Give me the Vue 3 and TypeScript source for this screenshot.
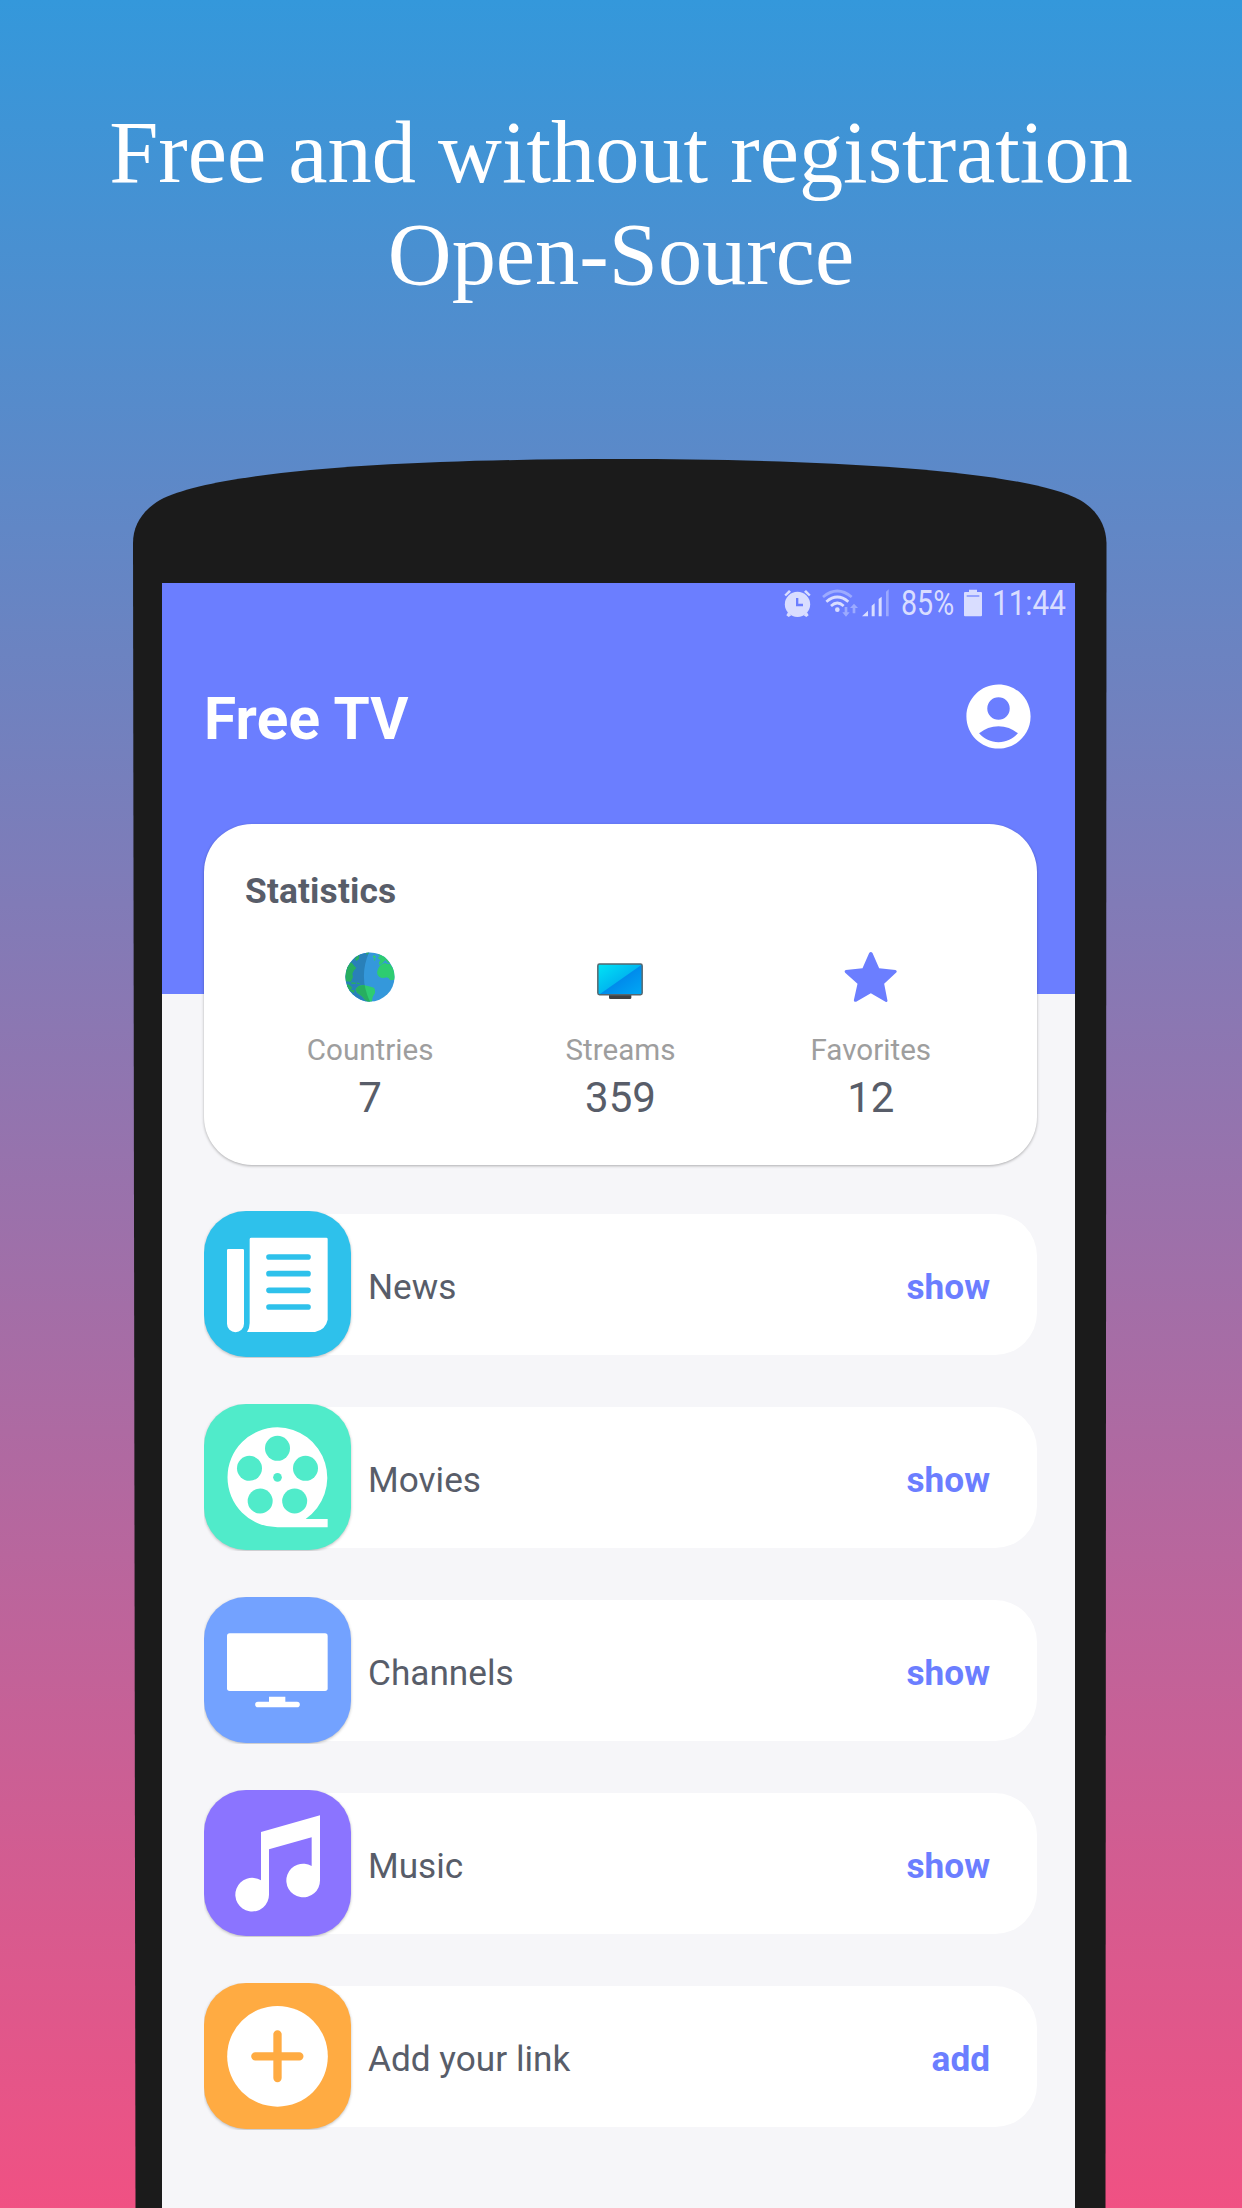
<script setup lang="ts">
type IconName = 'news' | 'movies' | 'channels' | 'music' | 'add'

interface Stat {
  icon: 'globe' | 'tv' | 'star'
  label: string
  value: number
}

interface Category {
  icon: IconName
  name: string
  action: string
}

const stats: Stat[] = [
  { icon: 'globe', label: 'Countries', value: 7 },
  { icon: 'tv', label: 'Streams', value: 359 },
  { icon: 'star', label: 'Favorites', value: 12 },
]

const categories: Category[] = [
  { icon: 'news', name: 'News', action: 'show' },
  { icon: 'movies', name: 'Movies', action: 'show' },
  { icon: 'channels', name: 'Channels', action: 'show' },
  { icon: 'music', name: 'Music', action: 'show' },
  { icon: 'add', name: 'Add your link', action: 'add' },
]
</script>

<template>
  <main class="promo">
    <h1 class="headline">Free and without registration<br />Open-Source</h1>

    <div class="phone">
      <div class="screen">
        <div class="status">
          <svg class="alarm" width="27" height="28" viewBox="0 0 81 84">
            <circle cx="40.500" cy="46" r="38" />
            <path d="M1 17 15 3 21 8 6 22ZM80 17 66 3 60 8 75 22ZM12 70 22 79 14 84 7 79ZM69 70 59 79 67 84 74 79Z" />
            <path class="cut" d="M36 27h7v17h14v8H36Z" />
          </svg>
          <svg class="wifi" width="36" height="28" viewBox="0 0 108 84">
            <g fill="none" stroke-width="8">
              <path class="dim-line" d="M3 24Q46-12 89 24" />
              <path class="line" d="M13 38Q46 10 79 38M27 51Q46 33 65 51" />
            </g>
            <circle cx="46" cy="62" r="7" />
            <path class="dim" d="M68 54h8v16h7L72 83 61 70h7ZM92 73v-16h-8L96 44l12 13h-8v16Z" />
          </svg>
          <svg class="signal" width="28" height="28" viewBox="0 0 84 84">
            <path d="M0 82 18 65V82ZM29 50l9-7V82h-9ZM50 30l9-7V82h-9Z" />
            <path class="dim" d="M72 8l8-7V82h-8Z" />
          </svg>
          <span class="percent"><span class="narrow">85%</span></span>
          <svg class="battery" width="18" height="28" viewBox="0 0 54 84">
            <path d="M15 2h24v7h12q3 0 3 3v67q0 3-3 3H3q-3 0-3-3V12q0-3 3-3h12Z" />
            <path class="cut" opacity=".6" d="M8 18h38v6H8Z" />
          </svg>
          <span class="clock"><span class="narrow">11:44</span></span>
        </div>

        <header class="top">
          <h2>Free TV</h2>
          <svg width="77" height="77" viewBox="0 0 24 24" fill="#fff">
            <path d="M12 2C6.480 2 2 6.480 2 12s4.480 10 10 10 10-4.480 10-10S17.520 2 12 2zM12 6a3.500 3.500 0 1 1 0 7 3.500 3.500 0 1 1 0-7zM12 20c-2.400 0-4.550-1.050-6.050-2.750Q8.600 15 12 15T18.050 17.250C16.550 18.950 14.400 20 12 20z" />
          </svg>
        </header>

        <section class="card">
          <h3>Statistics</h3>
          <div class="stats">
            <div v-for="s in stats" :key="s.label" class="stat">
              <svg v-if="s.icon === 'globe'" width="58" height="58" viewBox="453 413 174 174">
                <defs>
                  <clipPath id="ball"><circle cx="540" cy="500" r="73.500" /></clipPath>
                  <clipPath id="shade"><path d="M460 420h80Q502 500 543 580h-83Z" /></clipPath>
                </defs>
                <g clip-path="url(#ball)">
                  <rect x="460" y="420" width="160" height="160" fill="#3498db" />
                  <path d="M460 420h80Q502 500 543 580h-83Z" fill="#2980b9" />
                  <g fill="#2ecc71">
                    <path d="M584 458Q594 462 600 460L605 468Q606 475 615 474V508L600 510Q598 502 590 501 578 506 568 500 559 493 562 482 566 467 576 461ZM562 431Q590 434 604 456L594 458 586 449 578 458 569 465 566 458 571 449 563 443 570 438ZM548 437l6-2 4 5-6 5ZM551 447l4-2 2 4-4 2ZM519 524 534 527 552 532Q556 536 555 548L548 560 545 577H537L526 570 516 558 501 547 497 536 506 527Z" />
                  </g>
                  <g fill="#27ae60">
                    <path d="M484 456 495 469 499 473 492 480 487 490 489 500 485 510 483 514 460 512V470ZM494 445 508 431 507 446 499 452ZM527 426h12l-8 8ZM471 520l8 4 8 8-5 6 12 2-2 8-12-6-10-12ZM484 516l14 1-2 4-12-1ZM500 516l12 4-10 2Z" />
                    <path clip-path="url(#shade)" d="M519 524 534 527 552 532V577H537L526 570 516 558 501 547 497 536 506 527Z" />
                  </g>
                </g>
              </svg>
              <svg v-else-if="s.icon === 'tv'" width="58" height="58" viewBox="93 413 174 174">
                <defs>
                  <linearGradient id="glass" x1="0" y1="0" x2="1" y2="1">
                    <stop offset="0" stop-color="#00e5f5" />
                    <stop offset=".6" stop-color="#00b0ef" />
                  </linearGradient>
                  <linearGradient id="gleam" x1="0" y1="0" x2="1" y2="1">
                    <stop offset=".3" stop-color="#007fe8" />
                    <stop offset="1" stop-color="#00a8f5" />
                  </linearGradient>
                </defs>
                <path d="M147 553h67v9q0 4-4 4h-59q-4 0-4-4Z" fill="#404042" />
                <rect x="113.500" y="461" width="133" height="92" rx="5" fill="url(#glass)" />
                <path d="M245 463V551H120Z" fill="url(#gleam)" />
                <rect x="113.500" y="461" width="133" height="92" rx="5" fill="none" stroke="#56666e" stroke-width="4.500" />
              </svg>
              <svg v-else width="58" height="58" viewBox="844.500 413 174 174">
                <path d="M926 428Q931 422 936 428L956 474 1005 479Q1011 481 1008 486L971 520 981 571Q980 577 975 574L931 549 887 574Q880 576 880 570L891 520 854 487Q850 481 856 479L906 474Z" fill="#6b7eff" />
              </svg>
              <span class="label">{{ s.label }}</span>
              <span class="value">{{ s.value }}</span>
            </div>
          </div>
        </section>

        <ul class="list">
          <li v-for="c in categories" :key="c.name" class="row">
            <span class="tile" :class="c.icon">
              <svg width="101" height="101" viewBox="0 0 303 303" fill="#fff">
                <g v-if="c.icon === 'news'" transform="translate(0 9)">
                  <path d="M4 36H47Q51 36 51 40V260A25 25 0 0 1 0 260V40Q0 36 4 36ZM73 2H298Q302 2 302 6V248Q296 278 264 285H60Q68 274 68 258V6Q68 2 73 2Z" />
                  <path class="ink" d="M126 60H243M126 110H243M126 160H243M126 210H243" stroke-width="17" stroke-linecap="round" />
                </g>
                <template v-else-if="c.icon === 'movies'">
                  <path d="M151.500 1A151 151 0 0 1 236 276H302V301H151.500A150 150 0 0 1 151.500 1Z" />
                  <g class="hole">
                    <circle cx="151.500" cy="151" r="13" />
                    <circle cx="151.500" cy="64" r="37.500" />
                    <circle cx="67.500" cy="124" r="37.500" />
                    <circle cx="235.500" cy="124" r="37.500" />
                    <circle cx="99.500" cy="222" r="37.500" />
                    <circle cx="203" cy="222" r="37.500" />
                  </g>
                </template>
                <template v-else-if="c.icon === 'channels'">
                  <rect x="0" y="40" width="302" height="173" rx="8" />
                  <path d="M126 230h49v15h35a8.500 8.500 0 0 1 0 17H93a8.500 8.500 0 0 1 0-17h33Z" />
                </template>
                <template v-else-if="c.icon === 'music'">
                  <path d="M102 57 279 7V202A50.500 50.500 0 1 1 254 159V73L126 109V244A50.500 50.500 0 1 1 102 202Z" />
                </template>
                <template v-else>
                  <circle cx="151.500" cy="151" r="151" />
                  <path class="ink" d="M151.500 85V216M85 151H217" stroke-width="25" stroke-linecap="round" />
                </template>
              </svg>
            </span>
            <div class="bar">
              <span class="name">{{ c.name }}</span>
              <a class="action">{{ c.action }}</a>
            </div>
          </li>
        </ul>
      </div>
    </div>
  </main>
</template>

<style>
body {
  margin: 0;
}
</style>

<style scoped>
.promo {
  width: 1242px;
  height: 2208px;
  overflow: hidden;
  background: linear-gradient(180deg, #3498db 0%, #f05183 100%);
  font-family: Roboto, sans-serif;
}

h1,
h2,
h3,
ul {
  margin: 0;
  padding: 0;
}

svg {
  display: block;
  flex: none;
}

.headline {
  box-sizing: border-box;
  height: 459px;
  padding-top: 101px;
  color: #fff;
  font: 400 88.4px/102px 'Liberation Serif', serif;
  text-align: center;
}

.phone {
  box-sizing: border-box;
  width: 974px;
  height: 1749px;
  margin-left: 133px;
  padding: 124px 32px 0 29px;
  background: #1b1b1b;
  clip-path: path('M0 84C0 66 10 51 27 41C90 8 310 0 487 0C664 0 884 8 947 41C964 51 973 66 973.5 84L972.500 1749H2.500Z');
}

.screen {
  height: 1625px;
  background: linear-gradient(#6b7eff 411px, #f6f6f9 411px);
}

.status {
  display: flex;
  align-items: flex-start;
  justify-content: flex-end;
  height: 61px;
  padding: 6px 9px 0 0;
  box-sizing: border-box;
  color: #d9ddff;
  fill: #d9ddff;
  font-size: 34.5px;
  line-height: 40px;
}

.status .cut {
  fill: #6b7eff;
}

.status .dim {
  fill: #9caaff;
}

.status .dim-line {
  stroke: #9caaff;
}

.status .line {
  stroke: #d9ddff;
}

.wifi {
  margin-left: 11px;
}

.signal {
  margin-left: 4px;
}

/* Condensed digits: full-width glyphs squeezed into a fixed slot. */
.percent,
.clock {
  flex: none;
  height: 40px;
  margin-top: -6px;
  white-space: nowrap;
}

.percent {
  width: 54px;
  margin-left: 11px;
}

.battery {
  margin-left: 9px;
}

.clock {
  width: 74px;
  margin-left: 10px;
}

.narrow {
  display: inline-block;
  transform: scaleX(0.86);
  transform-origin: 0 50%;
}

.percent .narrow {
  transform: scaleX(0.83);
}

.top {
  display: flex;
  align-items: center;
  justify-content: space-between;
  height: 144px;
  padding: 0 38px 0 42px;
}

h2 {
  color: #fff;
  font-size: 58.5px;
  font-weight: 700;
  line-height: 68px;
  letter-spacing: 0.2px;
  margin-top: 6px;
}

.card {
  box-sizing: border-box;
  height: 341px;
  margin: 36px 38px 0 42px;
  padding: 47px 41px 0;
  border-radius: 48px;
  background: #fff;
  box-shadow: 0 1px 3px rgba(0, 0, 0, 0.3);
}

h3 {
  color: #585d69;
  font-size: 35.3px;
  font-weight: 700;
  line-height: 41px;
  letter-spacing: 0.15px;
}

.stats {
  display: flex;
  margin-top: 36px;
}

.stat {
  flex: 1;
  display: flex;
  flex-direction: column;
  align-items: center;
}

.label {
  margin-top: 27px;
  color: #9e9e9e;
  font-size: 29.6px;
  line-height: 35px;
}

.value {
  margin-top: 5px;
  color: #585d69;
  font-size: 42px;
  line-height: 49px;
}

.list {
  display: flex;
  flex-direction: column;
  gap: 46px;
  margin: 46px 38px 0 42px;
  list-style: none;
}

.row {
  display: flex;
  align-items: center;
  height: 147px;
  overflow: hidden;
}

.tile {
  position: relative;
  flex: none;
  align-self: flex-start;
  display: flex;
  align-items: center;
  justify-content: center;
  width: 147px;
  height: 146px;
  border-radius: 42px;
  background: var(--tint);
  box-shadow: 0 1px 3px rgba(0, 0, 0, 0.25);
}

.news { --tint: #2ec1eb; }
.movies { --tint: #50ebca; }
.channels { --tint: #73a2ff; }
.music { --tint: #8b74ff; }
.add { --tint: #ffab42; }

.ink {
  fill: none;
  stroke: var(--tint);
}

.hole {
  fill: var(--tint);
}

.bar {
  flex: 1;
  box-sizing: border-box;
  display: flex;
  align-items: center;
  justify-content: space-between;
  height: 141px;
  margin-left: -74px;
  padding: 5px 47px 0 91px;
  border-radius: 0 42px 42px 0;
  background: #fff;
  font-size: 35.2px;
  line-height: 41px;
}

.name {
  color: #585d69;
}

.action {
  color: #6b7eff;
  font-weight: 700;
}
</style>
